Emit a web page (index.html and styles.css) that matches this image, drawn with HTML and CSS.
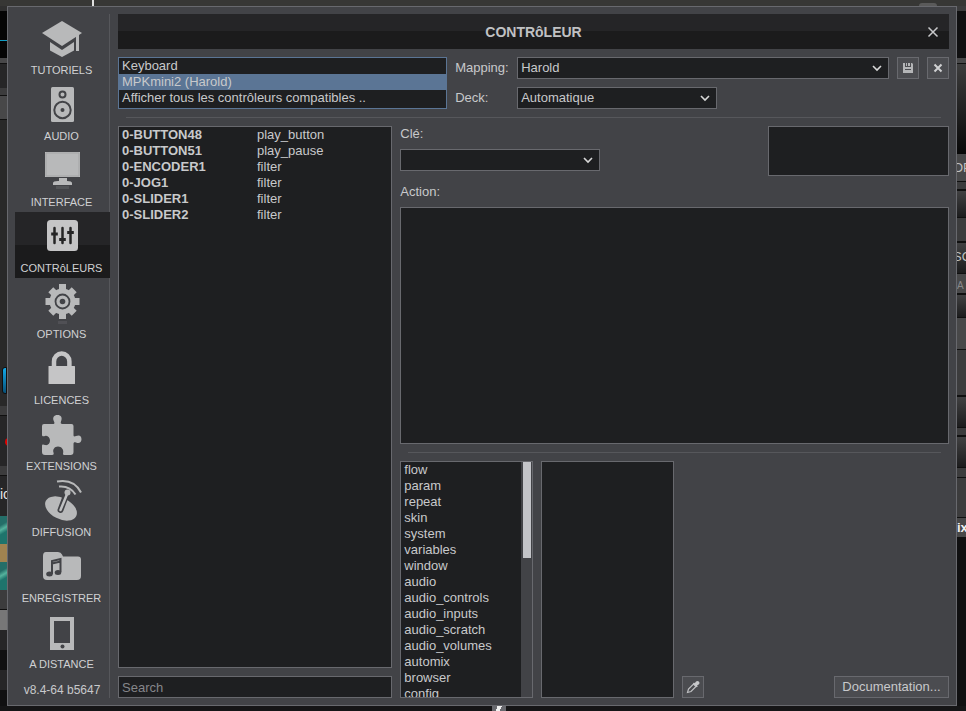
FILE: index.html
```html
<!DOCTYPE html>
<html lang="fr">
<head>
  <meta charset="UTF-8">
  <meta name="viewport" content="width=device-width,initial-scale=1">
  <title>Contrôleur</title>
  <link rel="stylesheet" href="styles.css">
</head>
<body>
  <div class="deckTop"><span class="marker"></span><span class="knobTop"></span></div>

  <div class="deckLeft">
    <div class="wave"></div>
    <div class="bar light h6"></div>
    <div class="dark h24"></div>
    <div class="bar h8"></div>
    <div class="bar light h24"></div>
    <div class="mesh h240"></div>
    <div class="mesh cue h46"><span></span></div>
    <div class="bar h10"></div>
    <div class="dark rec h50"><span></span></div>
    <div class="bar h10"></div>
    <div class="dark h40"><span class="cut">ic</span></div>
    <div class="cover teal h28"></div>
    <div class="cover sand h18"></div>
    <div class="cover teal h28"></div>
    <div class="bar h20"></div>
    <div class="pale h20"></div>
    <div class="dark h20"></div>
    <div class="black h20"></div>
    <div class="dark h20"></div>
    <div class="black rest"></div>
  </div>

  <main class="dialog">
    <nav class="sidebar">
      <a href="#tutoriels">
        <svg viewBox="0 0 48 42"><path d="M24 7 44 19 24 32 4 19z"/><path d="M12 28l12 8 12-8v8.500l-12 6.500-12-6.500z"/><path d="M38 21h3v16h-3z"/></svg>
        TUTORIELS
      </a>
      <a href="#audio">
        <svg viewBox="0 0 48 42"><rect x="13" y="7" width="23" height="35" rx="1.500"/><g class="cutout"><circle cx="24.500" cy="14.500" r="3"/><circle cx="24.500" cy="30" r="8.200"/></g><circle cx="24.500" cy="30" r="2" class="hole"/></svg>
        AUDIO
      </a>
      <a href="#interface">
        <svg viewBox="0 0 48 42"><path d="M7 6h35v25H7z"/><path d="M21 32h8v3h-8zM15 37q0-2 5-2h9q5 0 5 2v2H15z"/><path d="M8 7h33v23H8z" class="bevel"/><path d="M18 40h13v3H18z" opacity=".15"/></svg>
        INTERFACE
      </a>
      <a href="#controleurs" class="active" aria-current="page">
        <svg viewBox="0 0 48 42"><rect x="9" y="8" width="31" height="31" rx="3.500"/><path class="sliders" d="M16.500 16v15M24.500 16v15M32.500 16v15"/><path class="caps" d="M13.200 22h6.600M21.200 27.500h6.600M29.200 20.500h6.600"/></svg>
        CONTRôLEURS
      </a>
      <a href="#options">
        <svg viewBox="0 0 48 42"><circle cx="24.500" cy="23.500" r="13"/><path class="teeth" d="M24.500 6v35M7.500 23.500h34M12.800 11.800l23.400 23.400M36.200 11.800 12.800 35.200"/><circle cx="24.500" cy="23.500" r="7" class="ring"/><circle cx="24.500" cy="23.500" r="2.800" class="hole"/><path d="M20 43h9v3h-9z" opacity=".12"/></svg>
        OPTIONS
      </a>
      <a href="#licences">
        <svg viewBox="0 0 48 42"><rect x="10.500" y="22" width="26.500" height="18" rx=".5"/><path class="shackle" d="M16 23v-5.500a7.700 8 0 0 1 15.400 0V23"/></svg>
        LICENCES
      </a>
      <a href="#extensions">
        <svg viewBox="0 0 48 42"><path transform="translate(-1 3)" d="M5 13q0-2 2-2h9c2 0 1.500-1.500 1-2.500-2-4 0-6.500 3.500-6.500s5.200 2.500 3.500 6.500c-.5 1.500-.5 2.500 1.500 2.500h9q2 0 2 2v9c0 2 1.500 1.500 2.500 1 3.500-1.500 5.500 0 5.500 3.300s-2.500 4.700-5.500 3.200c-1.500-.7-2.500-.5-2.500 1.500v8q0 3-3 3h-6c-2 0-1.500-1-1.300-2.500.5-3-1.700-6-5.200-6s-5.500 3-4.500 6c.4 1.500.4 2.500-1.500 2.500H8q-3 0-3-3v-6c0-2 1.500-1.500 3-1 3 .7 5-1.500 5-4.500s-2.500-5.500-5-4.500c-1.500.5-3 .5-3-1z"/></svg>
        EXTENSIONS
      </a>
      <a href="#diffusion">
        <svg viewBox="0 0 48 42"><g transform="translate(0 2)"><ellipse cx="23" cy="30.500" rx="17" ry="10.500" transform="rotate(27 23 30.500)"/><path class="armEdge" d="M22.500 32l4.500-12"/><path class="arm" d="M22.500 32l7-17"/><circle cx="29.500" cy="14.500" r="3"/><path class="waves" d="M19 3.500q17-3 24 11M21 8.500q11-1 16.500 8"/></g></svg>
        DIFFUSION
      </a>
      <a href="#enregistrer">
        <svg viewBox="0 0 48 42"><path transform="translate(0 3)" d="M5 11q0-4 3-4h12q3 0 4 2.500l1 2h15q3 0 3 3V31q0 4-4 4H9q-4 0-4-4z"/><path class="note" d="M14 32V19l8.500-2V30M14 21.500l8.500-2"/><ellipse cx="11.500" cy="32" rx="3.300" ry="2.500" class="hole"/><ellipse cx="20" cy="30.500" rx="3.300" ry="2.500" class="hole"/></svg>
        ENREGISTRER
      </a>
      <a href="#distance">
        <svg viewBox="0 0 48 42"><path d="M12 9h24v33H12z"/><path class="hole" d="M16 13h16v22H16z"/><circle cx="24.500" cy="38.500" r="2" class="hole"/></svg>
        A DISTANCE
      </a>
      <div class="version">v8.4-64 b5647</div>
    </nav>

    <div class="content">
      <header class="titleBar">
        <h1>CONTRôLEUR</h1>
        <button class="close" aria-label="Fermer"><svg viewBox="0 0 12 12"><path d="M1.500 1.500l9 9M10.500 1.500l-9 9"/></svg></button>
      </header>

      <section class="device">
        <ul class="list deviceList" role="listbox" aria-label="Contrôleurs">
          <li role="option">Keyboard</li>
          <li role="option" aria-selected="true" class="selected">MPKmini2 (Harold)</li>
          <li role="option">Afficher tous les contrôleurs compatibles ..</li>
        </ul>
        <div class="deviceForm">
          <div class="row">
            <label for="mapping">Mapping:</label>
            <select id="mapping" class="wide"><option>Harold</option></select>
            <button class="iconBtn" aria-label="Enregistrer le mapping"><svg viewBox="0 0 12 12"><path d="M1 1h2v4h6V1h1l1 1v9H1z"/><path d="M6 1h2v3H6zM4 1h1v3H4z"/><path class="slot" d="M3 7.500h6"/></svg></button>
            <button class="iconBtn" aria-label="Supprimer le mapping"><svg viewBox="0 0 12 12"><path class="cross" d="M2.500 2.500l7 7M9.500 2.500l-7 7"/></svg></button>
          </div>
          <div class="row">
            <label for="deck">Deck:</label>
            <select id="deck"><option>Automatique</option></select>
          </div>
        </div>
      </section>

      <hr>

      <section class="editor">
        <div class="keys">
          <div class="list keyList">
            <table>
              <tbody>
                <tr><th scope="row">0-BUTTON48</th><td>play_button</td></tr>
                <tr><th scope="row">0-BUTTON51</th><td>play_pause</td></tr>
                <tr><th scope="row">0-ENCODER1</th><td>filter</td></tr>
                <tr><th scope="row">0-JOG1</th><td>filter</td></tr>
                <tr><th scope="row">0-SLIDER1</th><td>filter</td></tr>
                <tr><th scope="row">0-SLIDER2</th><td>filter</td></tr>
              </tbody>
            </table>
          </div>
          <input type="text" class="search" placeholder="Search" aria-label="Search">
        </div>

        <div class="actions">
          <div class="keyRow">
            <div class="keyField">
              <label for="key">Clé:</label>
              <select id="key"><option></option></select>
              <label for="action">Action:</label>
            </div>
            <div class="list info"></div>
          </div>
          <textarea id="action"></textarea>
          <hr>
          <div class="verbs">
            <div class="list verbList">
              <ul role="listbox" aria-label="Verbes">
                <li role="option">flow</li>
                <li role="option">param</li>
                <li role="option">repeat</li>
                <li role="option">skin</li>
                <li role="option">system</li>
                <li role="option">variables</li>
                <li role="option">window</li>
                <li role="option">audio</li>
                <li role="option">audio_controls</li>
                <li role="option">audio_inputs</li>
                <li role="option">audio_scratch</li>
                <li role="option">audio_volumes</li>
                <li role="option">automix</li>
                <li role="option">browser</li>
                <li role="option">config</li>
              </ul>
              <div class="scrollbar"><div class="thumb"></div></div>
            </div>
            <div class="list verbDetail"></div>
            <button class="iconBtn" aria-label="Pipette"><svg class="pipette" viewBox="0 0 14 14"><path class="tube" d="M1.500 12.500l1-3.500 5-5 2.500 2.500-5 5z"/><path d="M7 3.500l1-1 .8.800 1.200-1.800q1.500-1.200 2.800 0 1.300 1.300.2 2.700L11 5.500l.8.800-1 1z"/></svg></button>
            <button class="docBtn">Documentation...</button>
          </div>
        </div>
      </section>
    </div>
  </main>

  <div class="deckRight">
    <div class="bar h6"></div>
    <div class="black h46"></div>
    <div class="bar light h6"></div>
    <div class="mesh fade h90"></div>
    <div class="bar light h28"><span class="cut under">OP</span></div>
    <div class="bar h8"></div>
    <div class="pad h28"></div>
    <div class="bar h24"></div>
    <div class="pad h32"><span class="cut under">SO</span></div>
    <div class="bar light h20 small"><span>A L</span></div>
    <div class="pad h24"></div>
    <div class="bar light h32"></div>
    <div class="bar h46"></div>
    <div class="pad h32"></div>
    <div class="bar h8"></div>
    <div class="pad h32"></div>
    <div class="bar h10"></div>
    <div class="bar h40"></div>
    <div class="bar light h20"><span class="title">ix</span></div>
    <div class="black rest"></div>
  </div>

  <div class="deckBottom"><span class="cursor"></span></div>
</body>
</html>
```

FILE: styles.css
```css
* { box-sizing:border-box; }
body { margin:0; height:100vh; overflow:hidden; display:grid; grid-template-columns:7px minmax(0,1fr) 9px; grid-template-rows:6px minmax(0,1fr) 5px; background:#161617; color:#c8c9cb; font:13px/16px "Liberation Sans", Arial, sans-serif; }
h1, ul { margin:0; padding:0; }
ul { list-style:none; }
button, select, input, textarea { font:inherit; color:inherit; border-radius:0; margin:0; }
hr { margin:8px; border:0; border-top:1px solid #56575b; flex:none; }

/* dialog */
.dialog { display:flex; background:#424347; border:1px solid #68696e; padding:7px; gap:8px; min-height:0; }
.sidebar { width:95px; flex:none; border-right:1px solid #56575b; display:flex; flex-direction:column; }
.sidebar a { height:66px; margin-right:-1px; padding:0 2px 2px 0; display:flex; flex-direction:column; align-items:center; color:#d0d1d3; font-size:11px; line-height:16px; text-decoration:none; }
.sidebar a.active { background:linear-gradient(#252527 50%, #1b1b1c 50%); }
.sidebar svg { width:48px; height:42px; flex:none; margin-bottom:6px; overflow:visible; fill:#b8b9ba; }
.sidebar .active svg, .sidebar a:nth-child(6) svg { fill:#c5c5c6; }
.version { font-size:12px; line-height:24px; padding-top:4px; text-align:center; }
.sidebar .hole { fill:#424347; }
.cutout { fill:none; stroke:#424347; stroke-width:2; }
.bevel { fill:none; stroke:#a4a5a6; }
.sliders { stroke:#242425; stroke-width:2.500; stroke-linecap:round; }
.caps { stroke:#242425; stroke-width:3; }
.teeth { stroke:#b8b9ba; stroke-width:7; }
.ring { fill:none; stroke:#424347; stroke-width:1.800; }
.shackle { fill:none; stroke:#c5c5c6; stroke-width:4.500; }
.arm { stroke:#c0c1c2; stroke-width:2.500; stroke-linecap:round; }
.armEdge { stroke:#424347; stroke-width:6; stroke-linecap:round; }
.waves { fill:none; stroke:#b8b9ba; stroke-width:2; }
.note { fill:none; stroke:#424347; stroke-width:2; }

.content { flex:1; min-width:0; display:flex; flex-direction:column; }
.titleBar { height:35px; flex:none; display:grid; grid-template-columns:32px 1fr 32px; align-items:center; background:linear-gradient(#252527 17px, #1b1b1c 17px); margin-bottom:8px; }
.titleBar h1 { grid-column:2; font-size:14px; line-height:16px; text-align:center; color:#c0c1c3; }
.close { border:0; background:none; padding:0; height:24px; display:grid; place-items:center; }
.close svg { width:12px; height:12px; stroke:#c8c9cb; stroke-width:1.500; }

.list { background:#1e1f21; border:1px solid #68696e; overflow:hidden; }
.list li { padding:0 3px; white-space:nowrap; }
.device { display:grid; grid-template-columns:2fr 3fr; gap:8px; }
.deviceList { border-color:#5b7595; }
.list .selected { background:#5b7595; }
.deviceForm { display:flex; flex-direction:column; gap:8px; }
.row { display:flex; gap:8px; align-items:center; }
.row label { width:54px; flex:none; }
select { width:200px; height:22px; padding:0 3px; appearance:none; border:1px solid #68696e; background:#1e1f21 url("data:image/svg+xml,%3Csvg xmlns='http://www.w3.org/2000/svg' width='10' height='8'%3E%3Cpath d='M1 2l4 4 4-4' fill='none' stroke='%23d8d8d8' stroke-width='1.600'/%3E%3C/svg%3E") no-repeat right 6px center; }
.wide { flex:1; min-width:0; }
.iconBtn, .docBtn { height:22px; padding:0; border:1px solid #68696e; background:#4b4c50; flex:none; }
.iconBtn { width:22px; display:grid; place-items:center; }
.iconBtn svg { width:12px; height:12px; fill:#b4b5b7; }
.iconBtn .pipette { width:14px; height:14px; fill:#c8c9cb; }
.slot { stroke:#4b4c50; }
.cross { stroke:#d0d1d3; stroke-width:2; }
.tube { fill:none; stroke:#c0c1c3; stroke-width:1.200; }

/* key list and action editor */
.editor { flex:1; min-height:0; display:grid; grid-template-columns:1fr 2fr; gap:8px; }
.keys { display:flex; flex-direction:column; gap:8px; min-width:0; min-height:0; }
.keyList { flex:1; }
table { width:100%; border-collapse:collapse; table-layout:fixed; }
th, td { padding:0 3px; text-align:left; }
th { width:135px; }
.search { height:22px; padding:0 3px; border:1px solid #68696e; background:#1e1f21; }
.search::placeholder { color:#85868a; }
.actions { display:grid; grid-template-columns:minmax(0,1fr); grid-template-rows:auto minmax(0,1fr) auto minmax(0,1fr); min-height:0; }
.keyRow { display:flex; justify-content:space-between; }
.keyField { display:flex; flex-direction:column; }
.keyField select { margin:7px 0 13px; }
.keyField label:last-child { margin-bottom:7px; }
.info { width:33%; height:50px; }
textarea { width:100%; height:100%; resize:none; padding:3px; border:1px solid #68696e; background:#1e1f21; }
.verbs { display:flex; gap:8px; align-items:flex-end; }
.verbList, .verbDetail { width:133px; height:100%; }
.verbList { display:flex; }
.verbList ul { flex:1; }
.scrollbar { width:11px; padding:0 1px 0 2px; background:#424347; }
.thumb { height:41%; background:#c3c4c8; }
.docBtn { margin-left:auto; width:115px; }

/* decks behind the dialog */
.deckTop, .deckBottom { grid-column:1 / -1; display:flex; }
.deckTop { background:#373735; }
.marker { width:2px; height:6px; margin-left:92px; background:#e0e0e0; }
.knobTop { width:18px; height:3px; margin:3px 29px 0 auto; border-radius:3px 3px 0 0; background:#5a5a5a; }
.deckBottom { background:#151516; }
.cursor { width:14px; height:5px; margin-left:492px; background:linear-gradient(115deg, #68696e 35%, #f0f0f0 35% 60%, #68696e 60%); }
.deckLeft, .deckRight { display:flex; flex-direction:column; overflow:hidden; }
.deckLeft div, .deckRight div { flex:none; overflow:hidden; white-space:nowrap; }
.bar { background:#3c3c3d; border-bottom:1px solid #101010; }
.light { background:#484849; }
.dark { background:#262627; }
.black { background:#101011; }
.pale { background:#777778; }
.mesh { background:#292929; }
.fade { background:linear-gradient(#3c3c3c, #080808); }
.pad { background:linear-gradient(#414142, #1c1c1d); border:1px solid #101010; border-width:1px 0; }
.wave { height:52px; background:linear-gradient(#303030 5px, #050505 5px 34px, #119dc4 34px 35px, #050505 35px); }
.cue span { display:block; height:27px; margin:7px 0 0 2px; border:1px solid #101010; border-radius:3px 0 0 3px; background:linear-gradient(#13a8e8, #075179); }
.rec span { display:block; width:8px; height:8px; margin:22px 0 0 5px; border-radius:50%; background:#e00000; }
.teal { background:linear-gradient(150deg, #246e68 30%, #55b29d 45%, #1e746c 60%); }
.sand { background:#a08350; }
.cut { display:block; padding-top:10px; font-size:14px; color:#e8e8e8; }
.under { margin-left:-4px; padding-top:6px; font-size:13px; color:#c0c0c0; }
.title { display:block; padding-top:2px; font-weight:bold; color:#f0f0f0; }
.small { font-size:10px; color:#88898b; padding-top:4px; }
.rest { flex:1 !important; }
.h6 { height:6px; } .h8 { height:8px; } .h10 { height:10px; } .h18 { height:18px; } .h20 { height:20px; }
.h24 { height:24px; } .h28 { height:28px; } .h32 { height:32px; } .h40 { height:40px; } .h46 { height:46px; }
.h50 { height:50px; } .h90 { height:90px; } .h240 { height:240px; }
```
